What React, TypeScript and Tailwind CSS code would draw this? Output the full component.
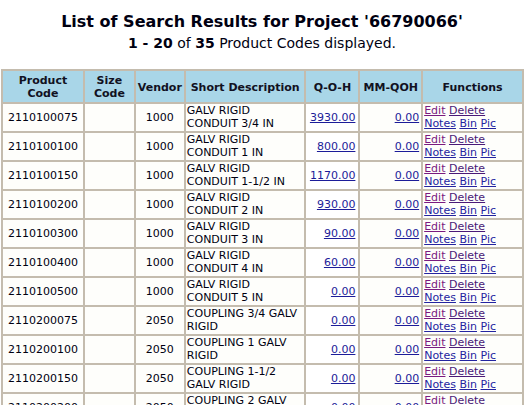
import React from 'react';

type Row = {
    code: string;
    size: string;
    vendor: string;
    desc: [string, string];
    qoh: string;
    mm: string;
};

const rows: Row[] = [
    { code: '2110100075', size: '', vendor: '1000', desc: ['GALV RIGID', 'CONDUIT 3/4 IN'], qoh: '3930.00', mm: '0.00' },
    { code: '2110100100', size: '', vendor: '1000', desc: ['GALV RIGID', 'CONDUIT 1 IN'], qoh: '800.00', mm: '0.00' },
    { code: '2110100150', size: '', vendor: '1000', desc: ['GALV RIGID', 'CONDUIT 1-1/2 IN'], qoh: '1170.00', mm: '0.00' },
    { code: '2110100200', size: '', vendor: '1000', desc: ['GALV RIGID', 'CONDUIT 2 IN'], qoh: '930.00', mm: '0.00' },
    { code: '2110100300', size: '', vendor: '1000', desc: ['GALV RIGID', 'CONDUIT 3 IN'], qoh: '90.00', mm: '0.00' },
    { code: '2110100400', size: '', vendor: '1000', desc: ['GALV RIGID', 'CONDUIT 4 IN'], qoh: '60.00', mm: '0.00' },
    { code: '2110100500', size: '', vendor: '1000', desc: ['GALV RIGID', 'CONDUIT 5 IN'], qoh: '0.00', mm: '0.00' },
    { code: '2110200075', size: '', vendor: '2050', desc: ['COUPLING 3/4 GALV', 'RIGID'], qoh: '0.00', mm: '0.00' },
    { code: '2110200100', size: '', vendor: '2050', desc: ['COUPLING 1 GALV', 'RIGID'], qoh: '0.00', mm: '0.00' },
    { code: '2110200150', size: '', vendor: '2050', desc: ['COUPLING 1-1/2', 'GALV RIGID'], qoh: '0.00', mm: '0.00' },
    { code: '2110200200', size: '', vendor: '2050', desc: ['COUPLING 2 GALV', 'RIGID'], qoh: '0.00', mm: '0.00' },
];

const th = 'border-2 border-[#c4bcae] bg-[#a9d6e8] px-px pt-[3px] pb-0.5 text-center font-bold text-[#111122]';
const td = 'border-2 border-[#c4bcae] bg-[#fefefb] px-px pt-0 pb-px align-middle';
const link = 'underline text-[#1c1c99]';

const App: React.FC = () => {
    return (
        <div className="min-h-screen bg-white font-['DejaVu_Sans',Verdana,sans-serif] text-[11px] leading-[13px] text-[#000011]">
            <div className="pt-[12px] text-center">
                <h1 className="text-[16px] font-bold leading-[20px]">List of Search Results for Project '66790066'</h1>
                <p className="mt-[3px] text-[14px] leading-[16px]">
                    <b>1 - 20</b> of <b>35</b> Product Codes displayed.
                </p>
            </div>

            <table className="ml-px mt-[18px] table-fixed border-collapse">
                <colgroup>
                    <col className="w-[82px]" />
                    <col className="w-[51px]" />
                    <col className="w-[50px]" />
                    <col className="w-[121px]" />
                    <col className="w-[54px]" />
                    <col className="w-[63px]" />
                    <col className="w-[101px]" />
                </colgroup>
                <thead>
                    <tr>
                        <th className={th}>Product<br />Code</th>
                        <th className={th}>Size<br />Code</th>
                        <th className={th}>Vendor</th>
                        <th className={th}>Short Description</th>
                        <th className={th}>Q-O-H</th>
                        <th className={th}>MM-QOH</th>
                        <th className={th}>Functions</th>
                    </tr>
                </thead>
                <tbody>
                    {rows.map((r) => (
                        <tr key={r.code}>
                            <td className={`${td} text-center`}>{r.code}</td>
                            <td className={td}>{r.size}</td>
                            <td className={`${td} text-center`}>{r.vendor}</td>
                            <td className={`${td} text-left`}>
                                {r.desc[0]}<br />{r.desc[1]}
                            </td>
                            <td className={`${td} bg-white pr-[3px] text-right`}>
                                <a className={link} href="#">{r.qoh}</a>
                            </td>
                            <td className={`${td} pr-[2px] text-right`}>
                                <a className={link} href="#">{r.mm}</a>
                            </td>
                            <td className={`${td} whitespace-nowrap text-left`}>
                                <a className="underline text-[#7a1a80]" href="#">Edit</a>{' '}
                                <a className="underline text-[#4a1a78]" href="#">Delete</a>
                                <br />
                                <a className="underline text-[#2424a0]" href="#">Notes</a>{' '}
                                <a className="underline text-[#2424a0]" href="#">Bin</a>{' '}
                                <a className="underline text-[#2424a0]" href="#">Pic</a>
                            </td>
                        </tr>
                    ))}
                </tbody>
            </table>
        </div>
    );
};

export default App;
